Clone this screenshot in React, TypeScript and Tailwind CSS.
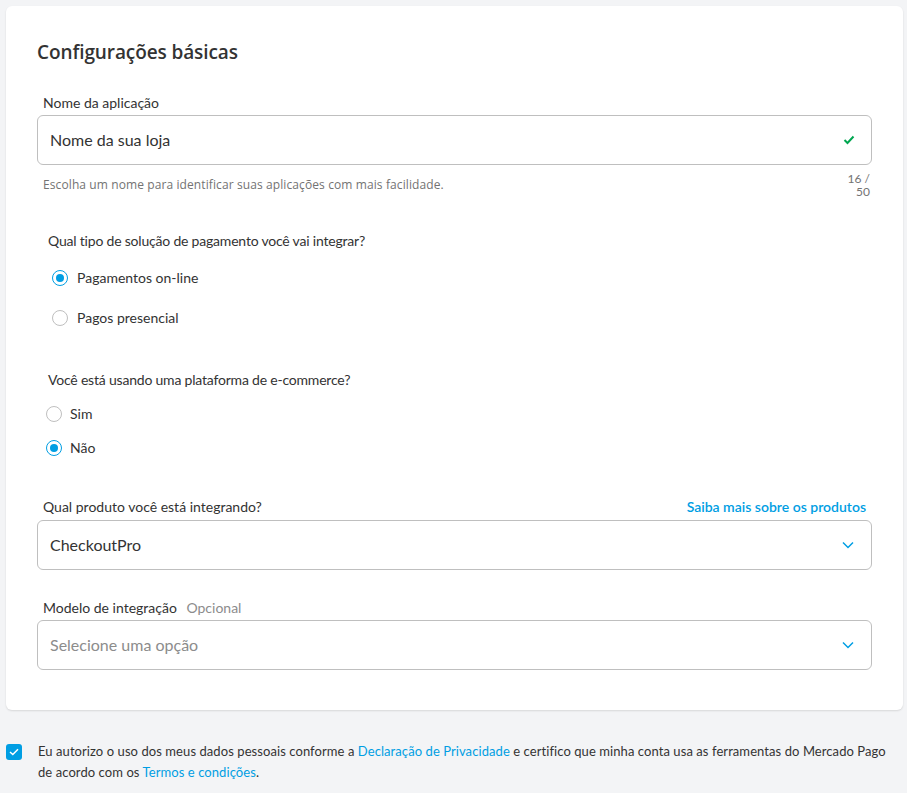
import React from "react";

const font = { fontFamily: "Lato, 'Liberation Sans', sans-serif" };
const openSans = { fontFamily: "'Open Sans', 'Liberation Sans', sans-serif" };

function Radio({ checked }: { checked: boolean }) {
  return checked ? (
    <span className="flex h-[16px] w-[16px] items-center justify-center rounded-full border-[1.5px] border-[#009ee3] bg-white">
      <span className="h-[8px] w-[8px] rounded-full bg-[#009ee3]" />
    </span>
  ) : (
    <span className="h-[16px] w-[16px] rounded-full border-[1.5px] border-[#bfbfbf] bg-white" />
  );
}

function Chevron() {
  return (
    <svg width="14" height="14" viewBox="0 0 14 14" fill="none">
      <path d="M2 4.5 L7 9.5 L12 4.5" stroke="#009ee3" strokeWidth="1.5" />
    </svg>
  );
}

export default function App() {
  return (
    <div className="min-h-[793px] w-full bg-[#f3f4f6] pt-[6px] text-[#333]" style={font}>
      <div className="ml-[6px] mr-[4px] rounded-[6px] bg-white px-[31px] pb-[40px] pt-[34px] shadow-[0_1px_2px_rgba(0,0,0,0.12)]">
        <h1 className="text-[19px] font-semibold leading-[24px] tracking-[-0.1px]" style={openSans}>
          Configurações básicas
        </h1>

        <div className="mt-[30px]">
          <div className="pl-[6px] text-[14px] leading-[18px]">Nome da aplicação</div>
          <div className="mt-[3px] flex h-[50px] items-center justify-between rounded-[6px] border border-[#bfbfbf] pl-[12px] pr-[16px]">
            <span className="text-[16px]">Nome da sua loja</span>
            <svg width="12" height="10" viewBox="0 0 12 10">
              <path d="M1.5 5 L4.5 8 L10.5 1.5" stroke="#00a650" strokeWidth="2" fill="none" />
            </svg>
          </div>
          <div className="mt-[7px] flex justify-between pl-[6px] pr-[2px] text-[12px] leading-[13px] text-[#737373]">
            <span className="mt-[6px] tracking-[0.1px]" style={openSans}>
              Escolha um nome para identificar suas aplicações com mais facilidade.
            </span>
            <span className="text-right">16 /<br />50</span>
          </div>
        </div>

        <div className="mt-[34px] pl-[9px]">
          <div className="pl-[2px] text-[14px] leading-[18px] tracking-[-0.2px]">Qual tipo de solução de pagamento você vai integrar?</div>
          <div className="mt-[17px] flex items-center gap-[9px] pl-[6px] text-[14px]">
            <Radio checked />
            <span>Pagamentos on-line</span>
          </div>
          <div className="mt-[19px] flex items-center gap-[9px] pl-[6px] text-[14px]">
            <Radio checked={false} />
            <span>Pagos presencial</span>
          </div>
        </div>

        <div className="mt-[43px] pl-[9px]">
          <div className="pl-[2px] text-[14px] leading-[18px] tracking-[-0.2px]">Você está usando uma plataforma de e-commerce?</div>
          <div className="mt-[14px] flex items-center gap-[8px] text-[14px]">
            <Radio checked={false} />
            <span>Sim</span>
          </div>
          <div className="mt-[13px] flex items-center gap-[8px] text-[14px]">
            <Radio checked />
            <span>Não</span>
          </div>
        </div>

        <div className="mt-[40px]">
          <div className="flex justify-between pl-[6px] pr-[6px] text-[14px] leading-[18px]">
            <span>Qual produto você está integrando?</span>
            <span className="font-semibold text-[#009ee3]">Saiba mais sobre os produtos</span>
          </div>
          <div className="mt-[4px] flex h-[50px] items-center justify-between rounded-[6px] border border-[#bfbfbf] pl-[12px] pr-[16px]">
            <span className="text-[16px]">CheckoutPro</span>
            <Chevron />
          </div>
        </div>

        <div className="mt-[29px]">
          <div className="pl-[6px] text-[14px] leading-[18px]">
            Modelo de integração <span className="ml-[6px] text-[#8c8c8c]">Opcional</span>
          </div>
          <div className="mt-[3px] flex h-[50px] items-center justify-between rounded-[6px] border border-[#bfbfbf] pl-[12px] pr-[16px]">
            <span className="text-[16px] text-[#8c8c8c]">Selecione uma opção</span>
            <Chevron />
          </div>
        </div>
      </div>

      <div className="mt-[31px] flex pl-[6px] pr-[14px]">
        <span className="mt-[3px] flex h-[16px] w-[16px] shrink-0 items-center justify-center rounded-[3px] bg-[#009ee3]">
          <svg width="10" height="8" viewBox="0 0 10 8">
            <path d="M1 4 L3.8 6.5 L9 1.2" stroke="white" strokeWidth="1.5" fill="none" />
          </svg>
        </span>
        <p className="ml-[16px] text-[13px] leading-[21px] tracking-[0.075px]">
          Eu autorizo o uso dos meus dados pessoais conforme a{" "}
          <span className="text-[#009ee3]">Declaração de Privacidade</span> e certifico que minha conta usa as ferramentas do Mercado Pago de acordo com os{" "}
          <span className="text-[#009ee3]">Termos e condições</span>.
        </p>
      </div>
    </div>
  );
}
